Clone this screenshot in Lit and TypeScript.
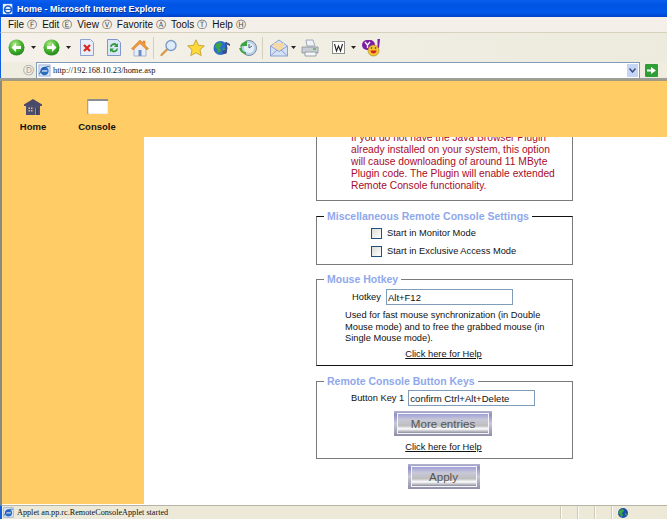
import { LitElement, html, css, svg } from "lit";
import { customElement } from "lit/decorators.js";

const circleArrow = (dir: number, fill = "#3fae2a") => svg`
  <svg width="17" height="17" viewBox="0 0 17 17">
    <defs><radialGradient id="g${dir}" cx=".4" cy=".3" r=".8"><stop offset="0" stop-color="#b6ec8e"/><stop offset=".55" stop-color="${fill}"/><stop offset="1" stop-color="#1c7a18"/></radialGradient></defs>
    <circle cx="8.5" cy="8.5" r="8" fill="url(#g${dir})"/>
    <path d="${dir < 0 ? "M3.5 8.5 8 4v3h5v3H8v3z" : "M13.5 8.5 9 4v3H4v3h5v3z"}" fill="#fff"/>
  </svg>`;

const caret = svg`<svg width="5" height="3" viewBox="0 0 5 3"><path d="M0 0h5L2.500 3z" fill="#222"/></svg>`;

const stopIcon = svg`<svg width="14" height="17" viewBox="0 0 14 17">
  <path d="M.5.500h10l3 3v13H.500z" fill="#e8eef9" stroke="#8ea2cf"/>
  <path d="M4 6l6 6M10 6l-6 6" stroke="#d8261c" stroke-width="2.200"/></svg>`;

const refreshIcon = svg`<svg width="14" height="17" viewBox="0 0 14 17">
  <path d="M.5.500h10l3 3v13H.500z" fill="#dbe6f8" stroke="#7f97ca"/>
  <path d="M3 8a4 4 0 0 1 7-2.500L11 4v4H7l1.500-1.500A2.500 2.500 0 0 0 4.500 8z" fill="#2e9a3a"/>
  <path d="M11 9.500a4 4 0 0 1-7 2.500L3 13.500v-4h4L5.500 11a2.500 2.500 0 0 0 4-1.500z" fill="#2e9a3a"/></svg>`;

const homeIcon = svg`<svg width="18" height="18" viewBox="0 0 18 18">
  <path d="M3 8v9h12V8L9 3z" fill="#e9edf5" stroke="#98a6c4" stroke-width=".8"/>
  <path d="M7.500 11h3v6h-3z" fill="#6d8cc4"/>
  <path d="M.5 9.500 9 1l3 3V2h2v4l3.500 3.500L16 11 9 4.500 2 11z" fill="#ee9a3c" stroke="#cf6f1c" stroke-width=".5"/></svg>`;

const searchIcon = svg`<svg width="18" height="18" viewBox="0 0 18 18">
  <path d="M7 10.500 1.500 16" stroke="#d99a4a" stroke-width="2.400" stroke-linecap="round"/>
  <circle cx="11" cy="6.500" r="5" fill="#dcecfb" stroke="#7d9dc8" stroke-width="1.400"/></svg>`;

const starIcon = svg`<svg width="18" height="18" viewBox="0 0 18 18">
  <path d="M9 .8l2.500 5.500 5.800.6-4.300 3.900 1.200 5.800L9 13.700l-5.200 2.900L5 10.800.7 6.900l5.800-.6z" fill="#ffd83a" stroke="#b99a24" stroke-width=".8"/></svg>`;

const mediaIcon = svg`<svg width="18" height="18" viewBox="0 0 18 18">
  <circle cx="7.500" cy="9" r="7" fill="#2b6fc9"/>
  <path d="M3 5l4-2 2 3-2 2 1 4-3 2-1-4-2-2zM10 9l3 1-1 3-2-1z" fill="#3aa63f"/>
  <path d="M13 3v9" stroke="#3d4a8f" stroke-width="1.500"/><path d="M13 3l4 2v2l-4-2z" fill="#3d4a8f"/>
  <ellipse cx="11.500" cy="13" rx="2.500" ry="2" fill="#3d4a8f"/></svg>`;

const historyIcon = svg`<svg width="18" height="18" viewBox="0 0 18 18">
  <circle cx="10" cy="9" r="7.500" fill="#bcd3ea" stroke="#7a8c9c"/>
  <circle cx="10" cy="9" r="5" fill="#e6f0f8"/>
  <path d="M10 5v4l3-2" stroke="#4a5d70" fill="none"/>
  <path d="M1 9c0-4 3-6 6-6l1-2v6H2z" fill="#3aa63f"/><path d="M1 9c1 3 3 5 6 5" stroke="#3aa63f" stroke-width="2" fill="none"/></svg>`;

const mailIcon = svg`<svg width="18" height="18" viewBox="0 0 18 18">
  <path d="M.5 7 9 1l8.500 6v10H.500z" fill="#d4e0f6" stroke="#8ea2cf"/>
  <path d="M4 4h10v5l-5 3-5-3z" fill="#f6d9a4"/>
  <path d="M.5 7 9 12.500 17.500 7M.5 17 7 11M17.500 17 11 11" fill="none" stroke="#8ea2cf"/></svg>`;

const printIcon = svg`<svg width="18" height="18" viewBox="0 0 18 18">
  <path d="M5 1h7l2 6H6z" fill="#f0f2f6" stroke="#8c9aa8" stroke-width=".8"/>
  <path d="M1 8h16v6H1z" fill="#c9ced4" stroke="#87909a" stroke-width=".8"/>
  <path d="M4 13h11v4H4z" fill="#f4f5f7" stroke="#87909a" stroke-width=".8"/>
  <path d="M12 10h3" stroke="#4caf50" stroke-width="1.400"/></svg>`;

const wordIcon = svg`<svg width="13" height="13" viewBox="0 0 13 13">
  <rect x=".5" y=".5" width="12" height="12" fill="#fff" stroke="#222" stroke-dasharray="1 1"/>
  <path d="M2.500 3l2 7 2-5 2 5 2-7" fill="none" stroke="#222" stroke-width="1.100"/></svg>`;

const yahooIcon = svg`<svg width="19" height="18" viewBox="0 0 19 18">
  <rect x="0" y="1" width="13" height="10" rx="5" fill="#7b1fa2"/>
  <path d="M3 3l2.500 3v3M8 3 5.500 6" stroke="#fff" stroke-width="1.300" fill="none"/>
  <path d="M15.500 0h2.500l-1 9h-1.500z" fill="#7b1fa2"/>
  <circle cx="11.500" cy="11.500" r="5.500" fill="#f4c534" stroke="#a57a10" stroke-width=".6"/>
  <path d="M8.500 11.500h6c0 4-6 4-6 0z" fill="#d3231c"/>
  <circle cx="9.500" cy="9" r=".8" fill="#333"/><circle cx="13.500" cy="9" r=".8" fill="#333"/></svg>`;

const goIcon = svg`<svg width="13" height="13" viewBox="0 0 13 13">
  <rect width="13" height="13" rx="1" fill="#2f9e36"/>
  <path d="M2 5.500h4V3l5 3.500L6 10V7.500H2z" fill="#fff"/></svg>`;

const ieIcon = (size: number) => svg`<svg width="${size}" height="${size}" viewBox="0 0 14 14">
  <rect x="1" y="1" width="12" height="12" fill="#dce8f8" stroke="#7c93c4" stroke-width=".7"/>
  <circle cx="7" cy="7.500" r="4.500" fill="#2a6bc4"/>
  <path d="M4 7.500h6" stroke="#fff" stroke-width="1.200"/>
  <path d="M1.500 11C4 5 9 2 12.500 3" stroke="#1d4f9c" fill="none"/></svg>`;

const titleIcon = svg`<svg width="12" height="12" viewBox="0 0 14 14">
  <rect x="1" y="1" width="11" height="12" fill="#e9f0fb"/>
  <circle cx="7" cy="7.500" r="4" fill="none" stroke="#1f5fc0" stroke-width="2"/>
  <path d="M3.500 7.500h7" stroke="#1f5fc0" stroke-width="1.300"/></svg>`;

const globeIcon = svg`<svg width="10" height="10" viewBox="0 0 10 10">
  <circle cx="5" cy="5" r="5" fill="#1e4fa8"/>
  <path d="M2 2l3-1 1 2-2 2 1 3-2 1-1-3-2-1zM7 5l2 1-1 2-1-1z" fill="#3aa63f"/></svg>`;

const dirHouse = svg`<svg width="18" height="16" viewBox="0 0 18 16">
  <path d="M9 0 18 5.500V7H0V5.500z" fill="#4a4a68"/>
  <path d="M2 6h14v10H2z" fill="#4c4c6e"/>
  <path d="M4.500 8.500h1.500v1.500H4.500zM7 8.500h1.500v1.500H7zM4.500 11h1.500v1.500H4.500zM7 11h1.500v1.500H7z" fill="#e6c25c"/>
  <path d="M11 9h3v7h-3z" fill="#3f3f5a"/><path d="M11 9h.8v7H11z" fill="#c99a55"/></svg>`;

const consoleIcon = svg`<svg width="21" height="15" viewBox="0 0 21 15">
  <rect width="21" height="15" fill="#efefef"/>
  <rect width="21" height="2" fill="#8d8d8d"/>
  <rect width="1.500" height="15" fill="#a0a0b0"/>
  <rect x="1.500" y="2" width="18.500" height="12" fill="#fff"/></svg>`;

@customElement("app-root")
export class AppRoot extends LitElement {
  static styles = css`
    :host {
      display: flex;
      flex-direction: column;
      width: 667px;
      height: 519px;
      overflow: hidden;
      background: #fff;
      font-family: "Liberation Sans", Arial, sans-serif;
      color: #111;
    }
    .title {
      flex: 0 0 17px;
      display: flex;
      align-items: center;
      gap: 3px;
      padding-left: 2px;
      background: linear-gradient(#0a5ff0, #0054e3 30%, #0058ea 75%, #0040c8);
      color: #fff;
      font: bold 9px "Liberation Sans", sans-serif;
      text-shadow: 1px 1px #0a2c90;
    }
    .menu {
      flex: 0 0 16px;
      display: flex;
      align-items: center;
      padding-left: 7px;
      background: #f4f0e9;
      border-left: 1px solid #1060e0;
      border-bottom: 1px solid #d8d2bd;
      font-size: 10px;
      box-sizing: border-box;
    }
    .menu span.item { display: inline-flex; gap: 3px; margin-right: 5px; align-items: center; }
    .menu i { font: normal 10px "DejaVu Sans", sans-serif; color: #444; }
    .tools {
      flex: 0 0 29px;
      display: flex;
      align-items: center;
      background: linear-gradient(90deg, #f5f1ea, #ecebdd);
      border-left: 1px solid #1060e0;
      box-sizing: border-box;
    }
    .tools > * { flex: none; display: flex; }
    .sep { width: 1px; height: 22px; background: #d4cfbd; }
    .addr {
      flex: 0 0 16px;
      display: flex;
      align-items: stretch;
      background: #efece0;
      border-left: 1px solid #1060e0;
    }
    .addr .lbl { width: 35px; display: flex; justify-content: flex-end; align-items: center; padding-right: 2px; box-sizing: border-box; font: 11px "DejaVu Sans", sans-serif; color: #999; }
    .field {
      width: 604px;
      display: flex;
      align-items: center;
      gap: 2px;
      background: #fff;
      border: 1px solid #7f9db9;
      border-bottom: none;
      padding-left: 1px;
      box-sizing: border-box;
      font: 8.400px "Liberation Serif", serif;
    }
    .field .url { flex: 1; }
    .drop {
      width: 11px;
      height: 13px;
      background: #c5d5f5;
      display: flex;
      align-items: center;
      justify-content: center;
      margin-right: 1px;
    }
    .go { margin-left: 5px; display: flex; align-items: center; }
    .rule { flex: 0 0 3px; background: linear-gradient(#9aa0a4, #a69a78); }
    .main {
      flex: 1;
      min-height: 0;
      display: flex;
      flex-direction: column;
      background: #fff;
      border-left: 2px solid #8a8a80;
    }
    .band {
      flex: 0 0 56px;
      display: flex;
      background: #ffcc66;
      position: relative;
      z-index: 1;
    }
    .nav { display: flex; flex-direction: column; align-items: center; gap: 6px; padding-top: 18px; font-size: 9.500px; line-height: 12px; font-weight: bold; color: #111; }
    .nav svg { display: block; }
    .nav.home { width: 62px; }
    .nav.console { width: 66px; }
    .nav.console svg { margin-bottom: 1px; }
    .row { flex: 1; min-height: 0; display: flex; }
    .side { width: 142px; flex: none; background: #ffcc66; margin-bottom: 1px; }
    .content {
      flex: 1;
      background: #fff;
      overflow: hidden;
      display: flex;
      flex-direction: column;
      align-items: flex-start;
      padding-left: 172px;
    }
    .stack { margin-top: -5px; width: 257px; display: flex; flex-direction: column; align-items: center; }
    fieldset {
      margin: 0;
      width: 100%;
      box-sizing: border-box;
      border: 1px solid #7a7a7a;
      padding: 0;
      font-size: 9.300px;
      line-height: 12px;
      flex: none;
    }
    legend {
      margin-left: 7px;
      padding: 0 3px;
      font-weight: bold;
      font-size: 10.500px;
      line-height: 12px;
      color: #8fa8ec;
    }
    .warn {
      border-top: none;
      color: #a80c28;
      font-size: 10.250px;
      height: 69px;
      padding: 0 0 0 34px;
      margin-bottom: 9px;
    }
    .misc { height: 55px; border-top-color: #111; margin-bottom: 8px; padding-top: 2px; }
    .check { display: flex; align-items: center; gap: 5px; padding-left: 54px; height: 18px; }
    .box { width: 9px; height: 9px; border: 1px solid #1c5180; background: linear-gradient(135deg, #dcdcd7, #fff); }
    .hot { height: 93px; border-bottom-color: #111; margin-bottom: 9px; padding-top: 3px; }
    .hotrow { display: flex; align-items: center; gap: 5px; height: 18px; padding-left: 35px; }
    input {
      box-sizing: border-box;
      border: 1px solid #7f9db9;
      font: 9.500px "Liberation Sans", sans-serif;
      padding: 0 1px;
      height: 16px;
      color: #111;
      margin: 0;
      outline: none;
    }
    .hotrow input { width: 127px; }
    .note { margin: 4px 0 0 28px; line-height: 11.500px; }
    .help { text-align: center; text-decoration: underline; margin-top: 3px; padding-right: 2px; color: #111; }
    .keys { height: 84px; margin-bottom: 5px; padding-top: 3px; }
    .keyrow { display: flex; align-items: center; gap: 4px; height: 16px; padding-left: 34px; }
    .keyrow input { width: 127px; font-size: 9.600px; }
    .btn {
      box-sizing: border-box;
      display: flex;
      align-items: center;
      justify-content: center;
      flex: none;
      height: 25px;
      padding: 2px 3px;
      background: linear-gradient(#b4b4cc, #9090c8 15%, #c8c8d8 50%, #8f8fa8);
    }
    .btn b {
      flex: 1;
      align-self: stretch;
      display: flex;
      align-items: center;
      justify-content: center;
      font-weight: normal;
      font-size: 11.600px;
      color: #555;
      border: 1px solid #f4f4fa;
      background: linear-gradient(#a0a0d8, #c8c8d8 30%, #bebebe 62%, #fff 78%, #8c8c9c);
    }
    .more { width: 98px; margin: 5px 0 0 77px; }
    .apply { width: 72px; margin-right: 2px; }
    .keys .help { margin-top: 5px; }
    .status {
      flex: 0 0 14px;
      display: flex;
      align-items: center;
      background: #ece9d8;
      border-top: 1px solid #b8b4a4;
      border-left: 2px solid #1060e0;
      box-sizing: border-box;
      font: 8.200px "Liberation Serif", serif;
    }
    .status .msg { flex: 1; padding-left: 1px; display: flex; align-items: center; gap: 3px; }
    .cell { width: 17px; align-self: stretch; border-left: 1px solid #fbfaf4; box-shadow: -1px 0 #cfcbb8; box-sizing: border-box; display: flex; align-items: center; padding-left: 5px; }
    .cell.w { width: 55px; }
  `;

  private icon(ml: number, c: unknown) {
    return html`<span style="margin-left:${ml}px">${c}</span>`;
  }

  render() {
    const menu = [["File", "Ⓕ"], ["Edit", "Ⓔ"], ["View", "Ⓥ"], ["Favorite", "Ⓐ"], ["Tools", "Ⓣ"], ["Help", "Ⓗ"]];
    return html`
      <div class="title">${titleIcon}<span>Home - Microsoft Internet Explorer</span></div>
      <div class="menu">${menu.map(([a, b]) => html`<span class="item">${a}<i>${b}</i></span>`)}</div>
      <div class="tools">
        ${this.icon(7, circleArrow(-1))}${this.icon(6, caret)}${this.icon(7, circleArrow(1))}${this.icon(6, caret)}
        ${this.icon(9, stopIcon)}${this.icon(13, refreshIcon)}${this.icon(10, homeIcon)}
        ${this.icon(4, html`<span class="sep"></span>`)}
        ${this.icon(6, searchIcon)}${this.icon(9, starIcon)}${this.icon(8, mediaIcon)}${this.icon(8, historyIcon)}
        ${this.icon(5, html`<span class="sep"></span>`)}
        ${this.icon(7, mailIcon)}${this.icon(3, caret)}${this.icon(5, printIcon)}${this.icon(13, wordIcon)}${this.icon(6, caret)}${this.icon(6, yahooIcon)}
      </div>
      <div class="addr">
        <div class="lbl">Ⓓ</div>
        <div class="field">
          ${ieIcon(13)}<span class="url">http://192.168.10.23/home.asp</span>
          <span class="drop"><svg width="7" height="5" viewBox="0 0 7 5"><path d="M.5.500 3.500 4 6.500.500" fill="none" stroke="#3a4a7a" stroke-width="1.400"/></svg></span>
        </div>
        <div class="go">${goIcon}</div>
      </div>
      <div class="rule"></div>
      <div class="main">
        <div class="band">
          <div class="nav home">${dirHouse}<span>Home</span></div>
          <div class="nav console">${consoleIcon}<span>Console</span></div>
        </div>
        <div class="row">
          <div class="side"></div>
          <div class="content">
            <div class="stack">
              <fieldset class="warn">
                If you do not have the Java Browser Plugin<br>
                already installed on your system, this option<br>
                will cause downloading of around 11 MByte<br>
                Plugin code. The Plugin will enable extended<br>
                Remote Console functionality.
              </fieldset>
              <fieldset class="misc">
                <legend>Miscellaneous Remote Console Settings</legend>
                <div class="check"><span class="box"></span>Start in Monitor Mode</div>
                <div class="check"><span class="box"></span>Start in Exclusive Access Mode</div>
              </fieldset>
              <fieldset class="hot">
                <legend>Mouse Hotkey</legend>
                <div class="hotrow">Hotkey <input value="Alt+F12" /></div>
                <div class="note">Used for fast mouse synchronization (in Double<br>Mouse mode) and to free the grabbed mouse (in<br>Single Mouse mode).</div>
                <div class="help">Click here for Help</div>
              </fieldset>
              <fieldset class="keys">
                <legend>Remote Console Button Keys</legend>
                <div class="keyrow">Button Key 1 <input value="confirm Ctrl+Alt+Delete" /></div>
                <div class="btn more"><b>More entries</b></div>
                <div class="help">Click here for Help</div>
              </fieldset>
              <div class="btn apply"><b>Apply</b></div>
            </div>
          </div>
        </div>
      </div>
      <div class="status">
        <div class="msg">${ieIcon(11)}<span>Applet an.pp.rc.RemoteConsoleApplet started</span></div>
        <div class="cell"></div><div class="cell"></div><div class="cell"></div><div class="cell w">${globeIcon}</div>
      </div>
    `;
  }
}
